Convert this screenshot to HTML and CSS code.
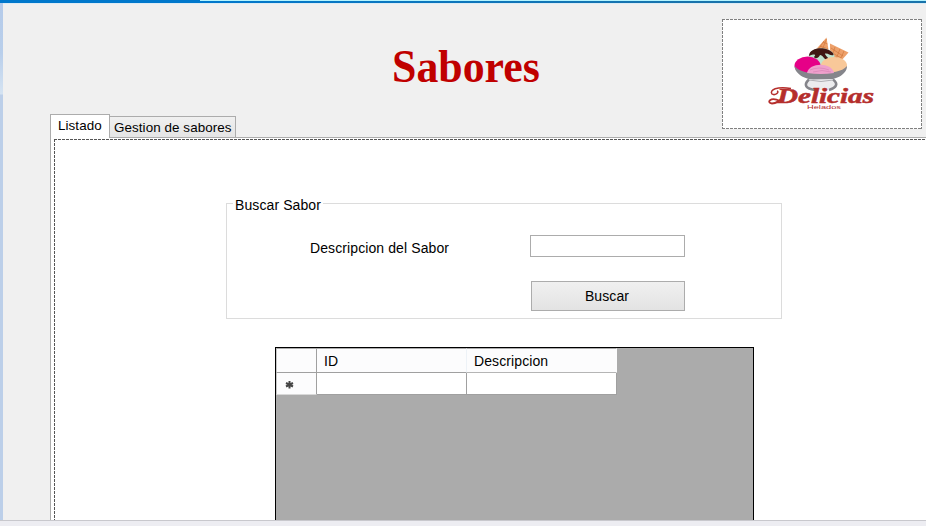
FILE: index.html
```html
<!DOCTYPE html>
<html lang="es">
<head>
<meta charset="utf-8">
<title>Sabores</title>
<link rel="stylesheet" href="styles.css">
</head>
<body>
<div class="topbar"></div>
<main class="window">
  <div class="edge"></div>
  <div class="form">
    <header class="header">
      <h1 class="title">Sabores</h1>
      <div class="logo dashed">
        <svg width="130" height="85" viewBox="0 0 130 85" role="img" aria-label="Delicias Helados">
          <path d="M60.500 20L71.500 7.500L74 23Z" fill="#eda06a"/>
          <path d="M75 13.500L93.500 22.500L86 31L75 27Z" fill="#eda06a"/>
          <path d="M65 16L73 19M68 12L72.500 14M67 20L71.500 9M63 20L69 11M80 17L77 27M85 19L81 29M89 21L86 28M76 18L88 26M76 22L86 28" stroke="#cb7238" stroke-width=".6"/>
          <ellipse cx="66.500" cy="27" rx="13" ry="9" fill="#bfe3cf"/>
          <path d="M54 26C54 20 62 17.500 69 18.500C75 19.500 79 23 78.500 25C75 26 74 23 70 23.500C70 26 75 28 73 30C69 30 68 25 65 25C63 29 60 29 59 27C62 24 59 24 54 26Z" fill="#411714"/>
          <ellipse cx="79" cy="35.500" rx="13" ry="8.500" fill="#f8c899"/>
          <ellipse cx="52.500" cy="35.500" rx="13" ry="9" fill="#e60087"/>
          <path d="M39.500 36C45 43 56 43 66 43S87 42 92 36C92 45 80 50.500 66 50.500S40 45 39.500 36Z" fill="#85858b"/>
          <path d="M52 43C54 32 77 32 79 43Q66 45 52 43Z" fill="#efa0cc"/>
          <path d="M55 40Q64 36 74 40M58 42Q67 39 76 42" fill="none" stroke="#d982b6" stroke-width=".7"/>
          <path d="M54 49.500C48 55 51 59 61 60H72C83 58 84 53 78 49Z" fill="#ececee"/>
          <path d="M54 49.500C48 55 51 59 60 60M78 49.500C84 54 81 58 74 60" fill="none" stroke="#85858b" stroke-width="2.600"/>
          <path d="M54 50Q66 53 78 50" fill="none" stroke="#b0b0b5"/>
          <path d="M36 58.500C22 56 14 60 17 64C20 66 25 62 22 61" fill="none" stroke="#b52e2c" stroke-width="1.500"/>
          <path d="M25 71C15 66 11 73 17 73.500C21 73.500 26 70 28 67" fill="none" stroke="#b52e2c" stroke-width="1.800"/>
          <text class="brand" x="22" y="72.500" textLength="97" lengthAdjust="spacingAndGlyphs">Delicias</text>
          <text class="brand-sub" x="52" y="79" textLength="34" lengthAdjust="spacingAndGlyphs">Helados</text>
        </svg>
      </div>
    </header>
    <nav class="tabs">
      <div class="tab tab-active">Listado</div>
      <div class="tab">Gestion de sabores</div>
    </nav>
    <section class="page">
      <div class="panel dashed">
        <fieldset class="group">
          <legend class="legend">Buscar Sabor</legend>
          <div class="fields">
            <label class="label" for="sabor">Descripcion del Sabor</label>
            <input class="input" id="sabor" type="text">
            <button class="button" type="button">Buscar</button>
          </div>
        </fieldset>
        <div class="grid">
          <div class="head corner"></div>
          <div class="head">ID</div>
          <div class="head last">Descripcion</div>
          <div class="cell marker">
            <svg width="9" height="9" viewBox="0 0 9 9"><path d="M4.500 1V8.500M1 3L8 6.500M8 3L1 6.500" stroke="#444" stroke-width="2"/></svg>
          </div>
          <div class="cell"></div>
          <div class="cell"></div>
        </div>
      </div>
    </section>
  </div>
</main>
<footer class="statusbar"></footer>
</body>
</html>
```
FILE: styles.css
```css
* { box-sizing: border-box; }

body {
  margin: 0;
  width: 926px;
  height: 526px;
  overflow: hidden;
  display: flex;
  flex-direction: column;
  background: #f0f0f0;
  color: #000;
  font: 14px/16px "Liberation Sans", Arial, sans-serif;
}

.topbar {
  height: 3px;
  background: linear-gradient(90deg, #0078cc 200px, #b4f4ff 200px) top / 100% 1px no-repeat, linear-gradient(90deg, #0078cc 200px, #1873ab 700px);
}

.window { height: 517px; display: flex; overflow: hidden; }

.edge {
  width: 3px;
  background: linear-gradient(#b5cbea, #b9cfeb 50px, #d5e3f2 91px, #bccfe9 92px);
}

.form { flex: 1; min-width: 0; border-top: 1px solid #dcebf5; display: flex; flex-direction: column; }

.header {
  height: 110px;
  display: flex;
  justify-content: space-between;
  padding: 15px 4px 0 389px;
}

.title {
  margin: 21px 0 0;
  font: bold 46px/53px "Liberation Serif", "Times New Roman", serif;
  color: #c00000;
  transform: scaleX(.953);
  transform-origin: left;
}

.dashed {
  --dash: #555;
  background:
    repeating-linear-gradient(90deg, var(--dash) 0 3px, transparent 3px 4px) top / 100% 1px no-repeat,
    repeating-linear-gradient(90deg, var(--dash) 0 3px, transparent 3px 4px) bottom / 100% 1px no-repeat,
    repeating-linear-gradient(180deg, var(--dash) 0 3px, transparent 3px 4px) left / 1px 100% no-repeat,
    repeating-linear-gradient(180deg, var(--dash) 0 3px, transparent 3px 4px) right / 1px 100% no-repeat,
    #fff;
}

.logo { --dash: #808080; width: 200px; height: 110px; padding: 11px 0 0 33px; }
.logo svg { display: block; }

.brand { font: italic bold 21px "Liberation Serif", serif; fill: #b52e2c; stroke: #b52e2c; stroke-width: .5px; }
.brand-sub { font: 6px "Liberation Sans", sans-serif; fill: #b52e2c; }

.tabs { height: 23px; display: flex; align-items: flex-end; padding-left: 47px; }

.tab {
  height: 21px;
  width: 126px;
  border: 1px solid #acacac;
  border-width: 1px 1px 0 0;
  background: linear-gradient(#f0f0f0, #e5e5e5);
  padding: 3px 0 0 4px;
  font-size: 13.400px;
  letter-spacing: .08px;
  white-space: nowrap;
}

.tab-active {
  position: relative;
  height: 24px;
  width: 60px;
  margin-bottom: -1px;
  border-left-width: 1px;
  background: #fff;
  padding: 3px 0 0 7px;
}

.page {
  flex: 1;
  margin-left: 47px;
  border: 1px solid #acacac;
  border-width: 1px 0 0 1px;
  background: #fff;
  padding: 1px 0 0 3px;
  overflow: hidden;
}

.panel { width: 900px; height: 420px; padding: 58px 0 0 172px; }

.group {
  width: 556px;
  height: 122px;
  margin: 0;
  border: 1px solid #dcdcdc;
  padding: 0 0 0 83px;
}

.legend { margin-left: -77px; padding: 0 2px; height: 13px; line-height: 16px; letter-spacing: .1px; }

.fields {
  display: grid;
  grid-template-columns: 220px 155px;
  grid-template-rows: 22px 30px;
  row-gap: 24px;
  padding-top: 25px;
}

.label { padding-top: 5px; letter-spacing: .1px; }

.input { width: 155px; height: 22px; border: 1px solid #acacac; background: #fff; padding: 0 3px; }

.button {
  grid-column: 2;
  margin: 0 0 0 1px;
  width: 154px;
  height: 30px;
  border: 1px solid #acacac;
  border-radius: 0;
  background: linear-gradient(#f0f0f0, #e3e3e3);
  color: #000;
  font: inherit;
  letter-spacing: .1px;
  padding: 0 2px 0 0;
}

.grid {
  width: 479px;
  height: 240px;
  margin: 28px 0 0 49px;
  border: 1px solid #000;
  background: #ababab;
  display: grid;
  grid-template-columns: 41px 150px 150px;
  grid-template-rows: 25px 22px;
  align-content: start;
}

.head { background: #fcfcfd; border-top: 1px solid #acacac; border-bottom: 1px solid #a0a0a0; border-right: 1px solid #edf2f7; padding: 4px 0 0 7px; letter-spacing: .1px; }
.head.last { border-right-color: #fcfcfd; border-bottom-color: #b5b5b5; }
.cell { background: #fff; border-right: 1px solid #a0a0a0; border-bottom: 1px solid #a0a0a0; }
.corner, .marker { border-left: 1px solid #c8c8c8; border-right: 1px solid #a0a0a0; }
.marker { background: #fcfcfd; padding: 7px 0 0 8px; border-bottom-color: #d8d8d8; }
.marker svg { display: block; }

.statusbar { height: 6px; background: #ededf2; border-top: 1px solid #c8c8cd; }
```
